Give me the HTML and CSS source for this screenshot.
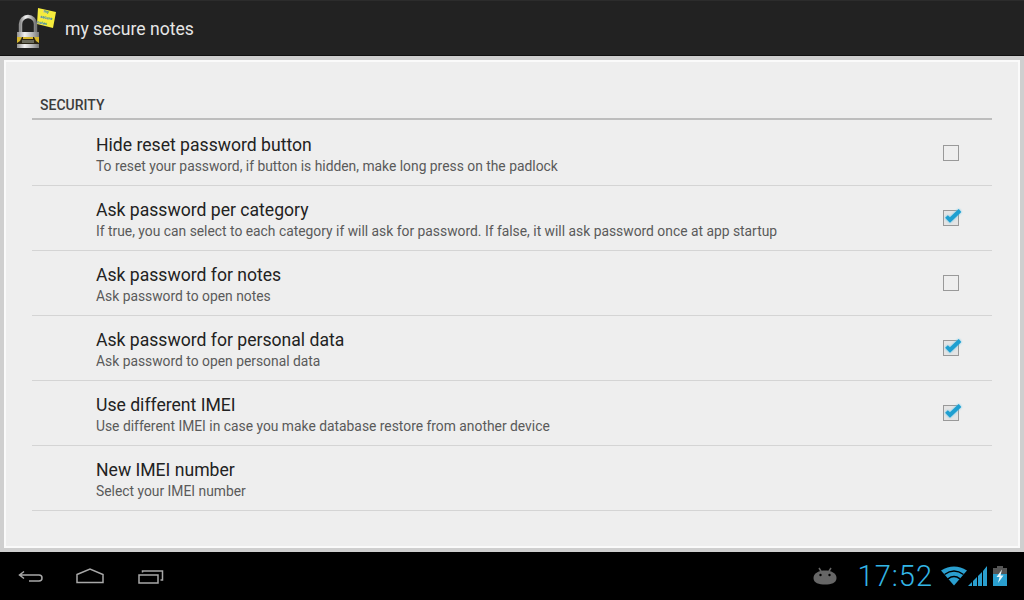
FILE: index.html
```html
<!DOCTYPE html>
<html lang="en">
<head>
    <meta charset="UTF-8">
    <title>my secure notes</title>
    <link rel="stylesheet" href="styles.css">
</head>
<body>
    <div class="action-bar">
        <svg class="logo" width="42" height="44" viewBox="0 0 42 44">
            <defs>
                <linearGradient id="metal" x1="0" y1="0" x2="1" y2="0">
                    <stop offset="0" stop-color="#8f8f8f"/>
                    <stop offset="0.35" stop-color="#f2f2f2"/>
                    <stop offset="0.7" stop-color="#b5b5b5"/>
                    <stop offset="1" stop-color="#777"/>
                </linearGradient>
            </defs>
            <path d="M6.500 28V19a7.500 7.500 0 0 1 15 0v9" fill="none" stroke="url(#metal)" stroke-width="3.400"/>
            <rect x="3" y="27" width="22" height="5" fill="url(#metal)"/>
            <rect x="3" y="32" width="22" height="7" fill="#2b2616"/>
            <path d="M3 32h5l-2 4-3 2zM25 32h-5l2 4 3 2zM9 32h10v2h-10z" fill="#d6b62c"/>
            <rect x="8" y="35" width="12" height="3" fill="#6b6b5c"/>
            <rect x="3" y="39" width="22" height="4" fill="url(#metal)"/>
            <polygon points="24,3 42,7 39,23 23,19" fill="#f6ec3c"/>
            <g transform="rotate(12 32 13)">
                <text class="logo-text" x="28" y="8">my</text>
                <text class="logo-text" x="26" y="14">secure</text>
                <text class="logo-text" x="24" y="20">notes</text>
            </g>
        </svg>
        <span class="app-title">my secure notes</span>
    </div>

    <div class="content">
        <div class="card">
            <h4 class="category">SECURITY</h4>
            <div class="row">
                <div class="row-text">
                    <div class="row-title">Hide reset password button</div>
                    <div class="row-sub">To reset your password, if button is hidden, make long press on the padlock</div>
                </div>
                <span class="check"></span>
            </div>
            <div class="row">
                <div class="row-text">
                    <div class="row-title">Ask password per category</div>
                    <div class="row-sub">If true, you can select to each category if will ask for password. If false, it will ask password once at app startup</div>
                </div>
                <span class="check on"><svg class="tick" width="20" height="18" viewBox="0 0 20 18"><path d="M4.500 10.500l3.500 3.500L18 4.500" fill="none" stroke="#1f9fd0" stroke-width="3.800"/></svg></span>
            </div>
            <div class="row">
                <div class="row-text">
                    <div class="row-title">Ask password for notes</div>
                    <div class="row-sub">Ask password to open notes</div>
                </div>
                <span class="check"></span>
            </div>
            <div class="row">
                <div class="row-text">
                    <div class="row-title">Ask password for personal data</div>
                    <div class="row-sub">Ask password to open personal data</div>
                </div>
                <span class="check on"><svg class="tick" width="20" height="18" viewBox="0 0 20 18"><path d="M4.500 10.500l3.500 3.500L18 4.500" fill="none" stroke="#1f9fd0" stroke-width="3.800"/></svg></span>
            </div>
            <div class="row">
                <div class="row-text">
                    <div class="row-title">Use different IMEI</div>
                    <div class="row-sub">Use different IMEI in case you make database restore from another device</div>
                </div>
                <span class="check on"><svg class="tick" width="20" height="18" viewBox="0 0 20 18"><path d="M4.500 10.500l3.500 3.500L18 4.500" fill="none" stroke="#1f9fd0" stroke-width="3.800"/></svg></span>
            </div>
            <div class="row">
                <div class="row-text">
                    <div class="row-title">New IMEI number</div>
                    <div class="row-sub">Select your IMEI number</div>
                </div>
            </div>
        </div>
    </div>

    <div class="nav-bar">
        <div class="nav-buttons">
            <svg width="26" height="16" viewBox="0 0 26 16"><path d="M6 3.500L1.500 7 6 10.500M2 7h19q3 0 3 3t-3 3H11" fill="none" stroke="#a8a8a8" stroke-width="1.500"/></svg>
            <svg width="28" height="16" viewBox="0 0 28 16"><path d="M1 6.500L14 1l13 5.500V14.500H1z" fill="none" stroke="#a8a8a8" stroke-width="1.500"/></svg>
            <svg width="28" height="16" viewBox="-1 0 28 16"><path d="M2 7h19v8H2zM5.500 4.500V3h20v9h-2" fill="none" stroke="#a8a8a8" stroke-width="1.500"/></svg>
        </div>
        <div class="status">
            <svg width="24" height="18" viewBox="0 0 24 18"><path d="M6 1l2.500 4M18 1l-2.500 4" stroke="#666" stroke-width="1.500"/><path d="M0.500 11C0.500 6 6 3.500 12 3.500S23.500 6 23.500 11 18 17.500 12 17.500 0.500 16 0.500 11z" fill="#666"/><circle cx="7.500" cy="8" r="1.200" fill="#000"/><circle cx="16.500" cy="8" r="1.200" fill="#000"/></svg>
            <span class="clock">17:52</span>
            <svg width="26" height="20" viewBox="0 0 26 20"><path d="M0 4.500Q13-3.500 26 4.500L13 19.500z" fill="#2a9fcf"/><path d="M3.500 8.500Q13 1.500 22.500 8.500M7 12.800Q13 8.300 19 12.800" fill="none" stroke="#000" stroke-width="1.500"/></svg>
            <svg class="signal" width="19" height="20" viewBox="0 0 19 20"><path d="M0 20L4 16V20zM5 20V15L9 11V20zM10 20V10L14 6V20zM15 20V5L19 0V20z" fill="#2a9fcf"/></svg>
            <svg class="battery" width="14" height="20" viewBox="0 0 14 20"><rect x="4" y="0" width="6" height="2" fill="#555"/><rect x="0" y="2" width="14" height="6" fill="#555"/><rect x="0" y="8" width="14" height="12" fill="#2a9fcf"/><path d="M9 3.500L3.500 11H6.500L5 17 10.500 9.500H7.500z" fill="#e8f6fb"/></svg>
        </div>
    </div>
</body>
</html>
```

FILE: styles.css
```css
body{
    margin: 0;
    width: 1024px;
    height: 600px;
    overflow: hidden;
    display: flex;
    flex-direction: column;
    background: #cfcfcf;
    font-family: "Roboto", "Liberation Sans", sans-serif;
}

.action-bar{
    height: 54px;
    flex: none;
    display: flex;
    align-items: center;
    background: #222;
    border-top: 1px solid #2c2c2c;
    border-bottom: 1px solid #111;
    margin-bottom: -1px;
}
.logo{
    margin-left: 14px;
    margin-top: -2px;
}
.logo-text{
    font-size: 4px;
    font-weight: bold;
    fill: #2a7fc0;
}
.app-title{
    margin-left: 9px;
    padding-top: 2px;
    color: #e6e6e6;
    font-size: 17.6px;
}

.content{
    flex: 1;
    padding: 5px 4px 4px;
    min-height: 0;
}
.card{
    height: 100%;
    box-sizing: border-box;
    background: #eee;
    border: 2px solid #fafafa;
    padding: 29px 26px 0;
}
.category{
    margin: 0 0 1px;
    height: 29px;
    box-sizing: border-box;
    padding: 6px 0 0 8px;
    border-bottom: 2px solid #bdbdbd;
    color: #3c3c3c;
    font-size: 14px;
    font-weight: 500;
    line-height: 16px;
}

.row{
    height: 65px;
    box-sizing: border-box;
    display: flex;
    align-items: center;
    justify-content: space-between;
    border-bottom: 1px solid #d4d4d4;
    padding-left: 64px;
}
.row-text{
    padding-top: 2px;
}
.row-title{
    color: #222;
    font-size: 17.6px;
    line-height: 22px;
}
.row-sub{
    margin-top: 1px;
    color: #5a5a5a;
    font-size: 13.85px;
    line-height: 18px;
}

.check{
    position: relative;
    width: 14px;
    height: 14px;
    margin-right: 33px;
    border: 1px solid #999;
    flex: none;
}
.check.on{
    background: #e4e4e4;
}
.tick{
    position: absolute;
    left: -2px;
    top: -5px;
    filter: drop-shadow(0 0 1px #5cc4ea);
}

.nav-bar{
    height: 48px;
    flex: none;
    display: flex;
    align-items: center;
    justify-content: space-between;
    background: #000;
}
.nav-buttons{
    display: flex;
    align-items: center;
    gap: 32px;
    padding-left: 18px;
}
.status{
    display: flex;
    align-items: center;
    padding-right: 17px;
}
.clock{
    color: #33b5e5;
    font-size: 29px;
    font-weight: 300;
    letter-spacing: 1px;
    margin: 0 8px 0 21px;
}
.signal{
    margin-left: 1px;
}
.battery{
    margin-left: 6px;
}
```
